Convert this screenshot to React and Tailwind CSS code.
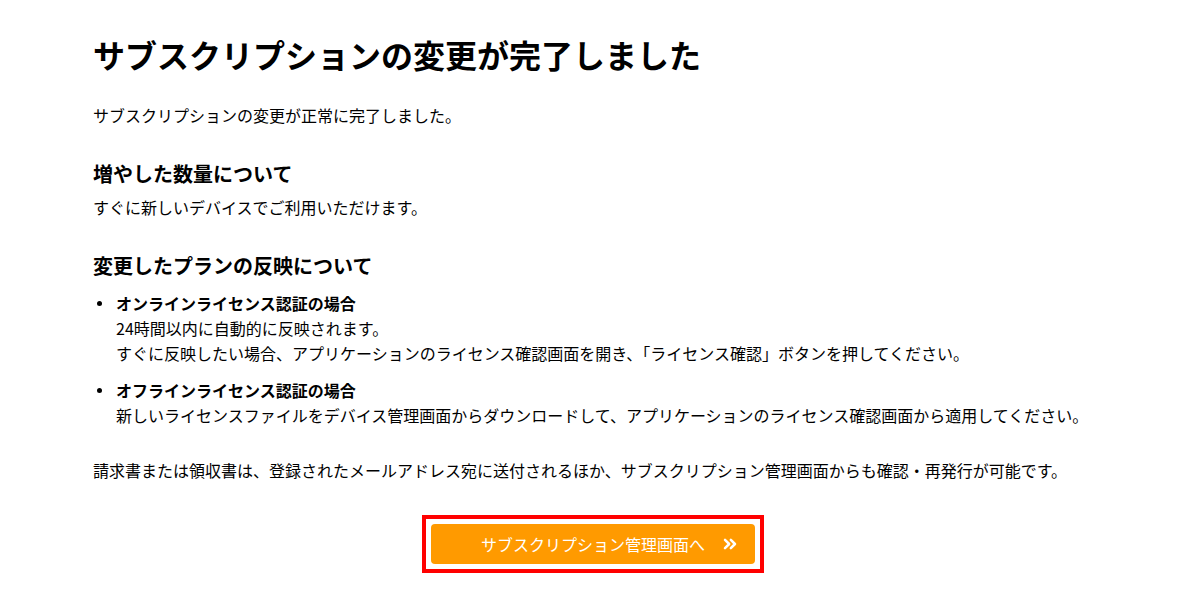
import { ChevronsRight } from 'lucide-react';

export default function App() {
  return (
    <div
      className="min-h-screen bg-white text-black"
      style={{ fontFamily: '"Noto Sans CJK JP", "Noto Sans", sans-serif' }}
    >
      <div className="w-[1000px] mx-auto pt-[30px]">
        <h1 className="text-[32px] leading-[48px] font-bold">サブスクリプションの変更が完了しました</h1>

        <p className="mt-[25px] text-[16px] leading-[25px]">サブスクリプションの変更が正常に完了しました。</p>

        <h2 className="mt-[31px] text-[20px] leading-[30px] font-bold">増やした数量について</h2>
        <p className="mt-[6px] text-[16px] leading-[25px]">すぐに新しいデバイスでご利用いただけます。</p>

        <h2 className="mt-[31px] text-[20px] leading-[30px] font-bold">変更したプランの反映について</h2>
        <ul className="mt-[10px] flex flex-col gap-[12px] text-[16px] leading-[25px]">
          <li className="flex">
            <span className="w-[23px] shrink-0 flex pt-[10px] pl-[4px]">
              <span className="w-[5px] h-[5px] rounded-full bg-black" />
            </span>
            <div>
              <p className="font-bold">オンラインライセンス認証の場合</p>
              <p>24時間以内に自動的に反映されます。</p>
              <p>すぐに反映したい場合、アプリケーションのライセンス確認画面を開き、「ライセンス確認」ボタンを押してください。</p>
            </div>
          </li>
          <li className="flex">
            <span className="w-[23px] shrink-0 flex pt-[10px] pl-[4px]">
              <span className="w-[5px] h-[5px] rounded-full bg-black" />
            </span>
            <div>
              <p className="font-bold">オフラインライセンス認証の場合</p>
              <p>新しいライセンスファイルをデバイス管理画面からダウンロードして、アプリケーションのライセンス確認画面から適用してください。</p>
            </div>
          </li>
        </ul>

        <p className="mt-[30px] text-[16px] leading-[25px]">請求書または領収書は、登録されたメールアドレス宛に送付されるほか、サブスクリプション管理画面からも確認・再発行が可能です。</p>

        <div className="mt-[32px] flex justify-center">
          <div className="border-[4px] border-[#ff0000] p-[5px]">
            <button
              type="button"
              className="relative w-[324px] h-[40px] rounded-[4px] bg-[#ff9a00] text-white text-[16px] flex items-center justify-center"
            >
              サブスクリプション管理画面へ
              <ChevronsRight className="absolute right-[15px] top-[10px]" size={20} strokeWidth={3} />
            </button>
          </div>
        </div>
      </div>
    </div>
  );
}
